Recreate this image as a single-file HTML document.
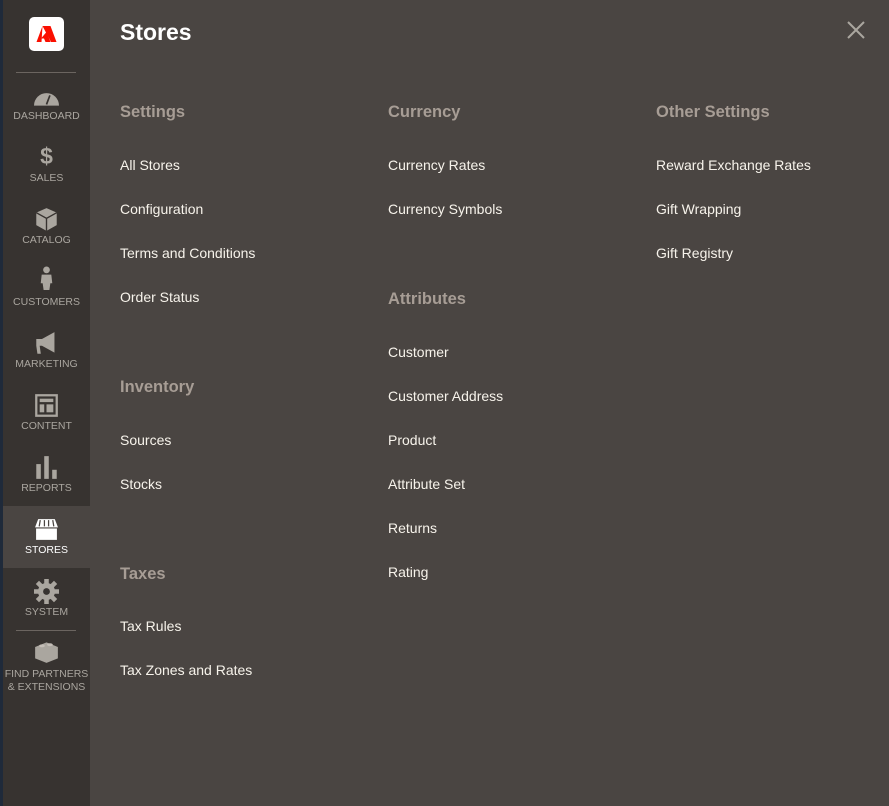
<!DOCTYPE html>
<html><head><meta charset="utf-8"><style>
*{margin:0;padding:0;box-sizing:border-box}
body{width:889px;height:806px;background:#4a4542;font-family:"Liberation Sans",sans-serif;position:relative;overflow:hidden}
.strip{position:absolute;left:0;top:0;width:3px;height:806px;background:#1f2a3a}
.side{position:absolute;left:3px;top:0;width:87px;height:806px;background:#373330}
.logo{position:absolute;left:29px;top:17px;width:35px;height:34px;background:#fff;border-radius:5px}
.hr{position:absolute;left:16px;width:60px;height:1px;background:#6b6560}
.item{position:absolute;left:3px;width:87px;height:62px}
.item.act{background:#4a4542}
.lbl{position:absolute;left:0;width:87px;text-align:center;font-size:10.5px;color:#aaa69f;line-height:13px}
.act .lbl{color:#fff}
.ic{position:absolute;left:31px;width:25px;height:25px}
.t{position:absolute;white-space:nowrap;line-height:20px}
.h1{font-size:23px;font-weight:bold;color:#fff}
.h{font-size:16.5px;font-weight:bold;color:#a79d95}
.l{font-size:14px;color:#f7f3eb}
</style></head><body>
<div class="strip"></div>
<div class="side"></div>
<div class="logo"><svg width="35" height="34" viewBox="0 0 35 34"><path d="M13.5 9h8l6 16h-5.5z" fill="#fa0f00"/><path d="M13.5 9l-6 16h5z" fill="#fa0f00"/><path d="M17.5 15l4 10h-5l-1.5-3.5h-3z" fill="#fa0f00"/></svg></div>
<div class="hr" style="top:72px"></div>
<div class="hr" style="top:630px"></div>

<div class="item" style="top:72px"><svg class="ic" style="top:12px" viewBox="0 0 22 22"><path d="M0 19a11 11 0 0 1 22 0z" fill="#aaa69f"/><path d="M11 18l3-8" stroke="#373330" stroke-width="1.5"/></svg><div class="lbl" style="top:38px">DASHBOARD</div></div>
<div class="item" style="top:134px"><div class="lbl" style="top:9px;font-size:23px;font-weight:bold;line-height:26px">$</div><div class="lbl" style="top:38px">SALES</div></div>
<div class="item" style="top:196px"><svg class="ic" style="top:11px" viewBox="0 0 22 22"><path d="M11 1l9 4v11l-9 5-9-5V5z" fill="#aaa69f"/><path d="M2 5l9 5 9-5M11 10v11" stroke="#373330" stroke-width="1.2" fill="none"/></svg><div class="lbl" style="top:38px">CATALOG</div></div>
<div class="item" style="top:258px"><svg class="ic" style="top:8px" viewBox="0 0 22 26"><circle cx="11" cy="4" r="3.5" fill="#aaa69f"/><path d="M6 9h10l1 9h-2l-1 7h-6l-1-7H5z" fill="#aaa69f"/></svg><div class="lbl" style="top:38px">CUSTOMERS</div></div>
<div class="item" style="top:320px"><svg class="ic" style="top:11px" viewBox="0 0 22 22"><path d="M2 7h5l11-6v18L7 13H5l1 7H3l-1-7z" fill="#aaa69f"/></svg><div class="lbl" style="top:38px">MARKETING</div></div>
<div class="item" style="top:382px"><svg class="ic" style="top:11px" viewBox="0 0 22 22"><rect x="1" y="1" width="20" height="20" fill="#aaa69f"/><rect x="3" y="3" width="16" height="16" fill="#373330"/><rect x="5" y="5" width="12" height="3" fill="#aaa69f"/><rect x="5" y="10" width="4" height="7" fill="#aaa69f"/><rect x="11" y="10" width="6" height="7" fill="#aaa69f"/></svg><div class="lbl" style="top:38px">CONTENT</div></div>
<div class="item" style="top:444px"><svg class="ic" style="top:11px" viewBox="0 0 22 22"><rect x="2" y="8" width="4" height="13" fill="#aaa69f"/><rect x="9" y="1" width="4" height="20" fill="#aaa69f"/><rect x="16" y="13" width="4" height="8" fill="#aaa69f"/></svg><div class="lbl" style="top:38px">REPORTS</div></div>
<div class="item act" style="top:506px"><svg class="ic" style="top:11px" viewBox="0 0 24 22"><path d="M4 1h16l3 8H1z" fill="#fff"/><path d="M6 2l-1 6M10 2v6M14 2v6M18 2l1 6" stroke="#4a4542" stroke-width="1.2"/><path d="M2 10h20v11H2z" fill="#fff"/></svg><div class="lbl" style="top:38px">STORES</div></div>
<div class="item" style="top:568px"><svg class="ic" style="top:11px" viewBox="0 0 22 22"><circle cx="11" cy="11" r="7.5" fill="#aaa69f"/><g stroke="#aaa69f" stroke-width="4"><path d="M11 0v22M0 11h22M3 3l16 16M19 3L3 19"/></g><circle cx="11" cy="11" r="3" fill="#373330"/></svg><div class="lbl" style="top:38px">SYSTEM</div></div>
<div class="item" style="top:630px"><svg class="ic" style="top:9px" viewBox="0 0 22 22"><path d="M11 3l10 4v10l-10 4-10-4V7z" fill="#aaa69f"/><ellipse cx="7" cy="6" rx="2.5" ry="1.3" fill="#c4beb7"/><ellipse cx="14" cy="5" rx="2.5" ry="1.3" fill="#c4beb7"/></svg><div class="lbl" style="top:38px">FIND PARTNERS<br>&amp; EXTENSIONS</div></div>

<div class="t h1" style="left:120px;top:21px;line-height:22px">Stores</div>
<svg style="position:absolute;left:847px;top:21px" width="18" height="18"><path d="M1 1l16 16M17 1L1 17" stroke="#aaa69f" stroke-width="2"/></svg>

<div class="t h" style="left:120px;top:102px">Settings</div>
<div class="t l" style="left:120px;top:155px">All Stores</div>
<div class="t l" style="left:120px;top:199px">Configuration</div>
<div class="t l" style="left:120px;top:243px">Terms and Conditions</div>
<div class="t l" style="left:120px;top:287px">Order Status</div>
<div class="t h" style="left:120px;top:377px">Inventory</div>
<div class="t l" style="left:120px;top:430px">Sources</div>
<div class="t l" style="left:120px;top:474px">Stocks</div>
<div class="t h" style="left:120px;top:564px">Taxes</div>
<div class="t l" style="left:120px;top:616px">Tax Rules</div>
<div class="t l" style="left:120px;top:660px">Tax Zones and Rates</div>

<div class="t h" style="left:388px;top:102px">Currency</div>
<div class="t l" style="left:388px;top:155px">Currency Rates</div>
<div class="t l" style="left:388px;top:199px">Currency Symbols</div>
<div class="t h" style="left:388px;top:289px">Attributes</div>
<div class="t l" style="left:388px;top:342px">Customer</div>
<div class="t l" style="left:388px;top:386px">Customer Address</div>
<div class="t l" style="left:388px;top:430px">Product</div>
<div class="t l" style="left:388px;top:474px">Attribute Set</div>
<div class="t l" style="left:388px;top:518px">Returns</div>
<div class="t l" style="left:388px;top:562px">Rating</div>

<div class="t h" style="left:656px;top:102px">Other Settings</div>
<div class="t l" style="left:656px;top:155px">Reward Exchange Rates</div>
<div class="t l" style="left:656px;top:199px">Gift Wrapping</div>
<div class="t l" style="left:656px;top:243px">Gift Registry</div>
</body></html>
